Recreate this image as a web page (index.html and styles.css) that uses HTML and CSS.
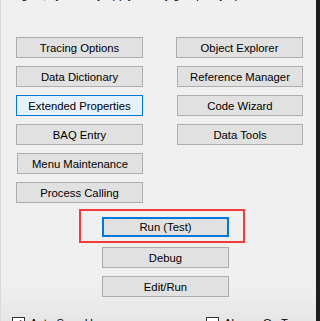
FILE: index.html
```html
<!DOCTYPE html>
<html lang="en">
<head>
  <meta charset="UTF-8" />
  <meta name="viewport" content="width=device-width, initial-scale=1.0"/>
  <title>Customization Tools</title>
  <link rel="stylesheet" href="styles.css">
</head>
<body>
  <div class="window">
    <div class="caption">Again, by the Key Apply on any group Key options</div>

    <div class="tools">
      <button class="btn">Tracing Options</button>
      <button class="btn">Object Explorer</button>
      <button class="btn">Data Dictionary</button>
      <button class="btn btn-narrow">Reference Manager</button>
      <button class="btn btn-hover">Extended Properties</button>
      <button class="btn btn-narrow">Code Wizard</button>
      <button class="btn">BAQ Entry</button>
      <button class="btn btn-narrow">Data Tools</button>
      <button class="btn btn-narrow">Menu Maintenance</button>
      <span></span>
      <button class="btn">Process Calling</button>
    </div>

    <div class="run-group">
      <div class="highlight">
        <button class="btn btn-default">Run (Test)</button>
      </div>
      <button class="btn">Debug</button>
      <button class="btn">Edit/Run</button>
    </div>

    <div class="options">
      <label class="check"><span class="box checked">&#10003;</span>Auto Sync Up</label>
      <label class="check"><span class="box"></span>Always On Top</label>
    </div>
  </div>
</body>
</html>
```

FILE: styles.css
```css
body {
  margin: 0;
  background: #1e1e1e;
  font-family: "Liberation Sans", Arial, sans-serif;
  font-size: 11.3px;
  color: #000;
}

.window {
  width: 315px;
  height: 321px;
  overflow: hidden;
  border-left: 1px solid #dadada;
  background: linear-gradient(#f0f0f0 88%, #e6e6e6);
}

.caption {
  margin-top: -11px;
  padding-left: 13px;
  height: 13px;
  line-height: 13px;
  white-space: nowrap;
}

.btn {
  box-sizing: border-box;
  display: block;
  height: 21px;
  padding: 0;
  font-family: inherit;
  font-size: 11.3px;
  color: #000;
  background: #e1e1e1;
  border: 1px solid #adadad;
  border-radius: 0;
}

.tools {
  display: grid;
  grid-template-columns: 127px 127px;
  column-gap: 33px;
  row-gap: 8px;
  margin-top: 35px;
  padding-left: 15px;
}

.tools .btn {
  width: 127px;
}

.tools .btn-narrow {
  width: 126px;
  margin-left: 1px;
}

.btn-hover {
  background: #e5f1fb;
  border-color: #0078d7;
}

.run-group {
  margin-top: 6px;
  padding-left: 101px;
}

.run-group .btn {
  width: 127px;
  margin-top: 8px;
}

.highlight {
  box-sizing: border-box;
  width: 166px;
  margin-left: -23px;
  padding: 6px 0 4px 21px;
  border: 2px solid #f53a3a;
}

.run-group .highlight .btn {
  margin-top: 0;
  height: 20px;
}

.run-group .highlight + .btn {
  margin-top: 4px;
}

.btn-default {
  border: 2px solid #0078d7;
}

.options {
  display: grid;
  grid-template-columns: 194px auto;
  margin-top: 20px;
  padding-left: 11px;
}

.check {
  display: flex;
  align-items: center;
  gap: 5px;
  line-height: 13px;
}

.box {
  box-sizing: border-box;
  width: 13px;
  height: 13px;
  border: 1px solid #333;
  background: #fff;
  font-size: 11px;
  line-height: 11px;
  text-align: center;
}
```
